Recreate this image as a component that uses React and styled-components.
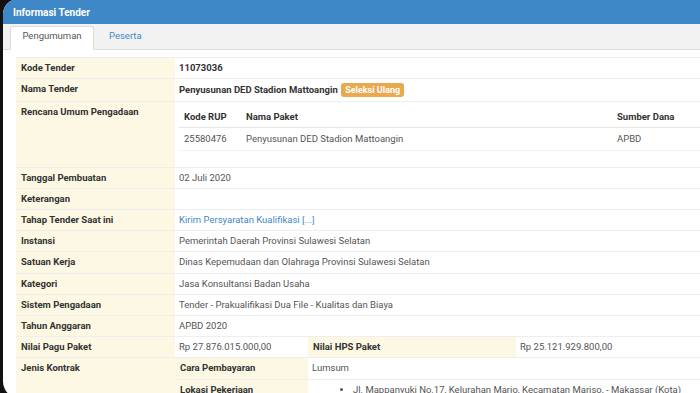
import React from "react";
import styled, { createGlobalStyle } from "styled-components";

const GlobalStyle = createGlobalStyle`
  html, body {
    margin: 0;
    padding: 0;
    background: #111;
    overflow: hidden;
  }
  body {
    font-family: Roboto, "Liberation Sans", sans-serif;
  }
`;

function App() {
  return (
    <>
      <GlobalStyle />
      <Frame>
        <Screen>
          <Header>Informasi Tender</Header>
          <Tabs>
            <Tab active>Pengumuman</Tab>
            <Tab>Peserta</Tab>
          </Tabs>
          <Content>
            <Table>
              <colgroup>
                <col style={{ width: "159px" }} />
                <col style={{ width: "133px" }} />
                <col style={{ width: "208px" }} />
                <col />
              </colgroup>
              <tbody>
                <tr>
                  <Label>Kode Tender</Label>
                  <Value colSpan={3} strong>11073036</Value>
                </tr>
                <tr>
                  <Label>Nama Tender</Label>
                  <Value colSpan={3} strong>
                    Penyusunan DED Stadion Mattoangin <Badge>Seleksi Ulang</Badge>
                  </Value>
                </tr>
                <tr>
                  <Label>Rencana Umum Pengadaan</Label>
                  <Value colSpan={3}>
                    <RupTable>
                      <colgroup>
                        <col style={{ width: "62px" }} />
                        <col style={{ width: "371px" }} />
                        <col />
                      </colgroup>
                      <thead>
                        <tr>
                          <RupHead>Kode RUP</RupHead>
                          <RupHead>Nama Paket</RupHead>
                          <RupHead>Sumber Dana</RupHead>
                        </tr>
                      </thead>
                      <tbody>
                        <tr>
                          <RupCell>25580476</RupCell>
                          <RupCell>Penyusunan DED Stadion Mattoangin</RupCell>
                          <RupCell>APBD</RupCell>
                        </tr>
                      </tbody>
                    </RupTable>
                  </Value>
                </tr>
                <tr>
                  <Label>Tanggal Pembuatan</Label>
                  <Value colSpan={3}>02 Juli 2020</Value>
                </tr>
                <tr>
                  <Label>Keterangan</Label>
                  <Value colSpan={3}></Value>
                </tr>
                <tr>
                  <Label>Tahap Tender Saat ini</Label>
                  <Value colSpan={3}>
                    <Link href="#">Kirim Persyaratan Kualifikasi [...]</Link>
                  </Value>
                </tr>
                <tr>
                  <Label>Instansi</Label>
                  <Value colSpan={3}>Pemerintah Daerah Provinsi Sulawesi Selatan</Value>
                </tr>
                <tr>
                  <Label>Satuan Kerja</Label>
                  <Value colSpan={3}>Dinas Kepemudaan dan Olahraga Provinsi Sulawesi Selatan</Value>
                </tr>
                <tr>
                  <Label>Kategori</Label>
                  <Value colSpan={3}>Jasa Konsultansi Badan Usaha</Value>
                </tr>
                <tr>
                  <Label>Sistem Pengadaan</Label>
                  <Value colSpan={3}>Tender - Prakualifikasi Dua File - Kualitas dan Biaya</Value>
                </tr>
                <tr>
                  <Label>Tahun Anggaran</Label>
                  <Value colSpan={3}>APBD 2020</Value>
                </tr>
                <tr>
                  <Label>Nilai Pagu Paket</Label>
                  <Value>Rp 27.876.015.000,00</Value>
                  <Label>Nilai HPS Paket</Label>
                  <Value>Rp 25.121.929.800,00</Value>
                </tr>
                <tr>
                  <Label rowSpan={2}>Jenis Kontrak</Label>
                  <Label>Cara Pembayaran</Label>
                  <Value colSpan={2}>Lumsum</Value>
                </tr>
                <tr>
                  <Label>Lokasi Pekerjaan</Label>
                  <Value colSpan={2}>
                    <List>
                      <li>Jl. Mappanyuki No.17, Kelurahan Mario, Kecamatan Mariso, - Makassar (Kota)</li>
                    </List>
                  </Value>
                </tr>
              </tbody>
            </Table>
          </Content>
        </Screen>
      </Frame>
    </>
  );
}

export default App;

const Frame = styled.div`
  display: flex;
  width: 700px;
  height: 393px;
  overflow: hidden;
  background: #111;
`;

const Screen = styled.div`
  flex: 1;
  margin-left: 3px;
  margin-top: -1px;
  height: 400px;
  background: #fff;
  border-radius: 15px 0 0 18px;
  overflow: hidden;
`;

const Header = styled.div`
  height: 25px;
  padding: 8px 0 0 10px;
  box-sizing: border-box;
  background: #3f88c8;
  color: #fff;
  font-size: 10px;
  font-weight: 700;
  line-height: 12px;
`;

const Tabs = styled.div`
  display: flex;
  height: 26px;
  padding: 2px 0 0 7px;
  box-sizing: border-box;
  background: #f2f2f2;
  border-bottom: 1px solid #dcdcdc;
`;

const Tab = styled.div`
  width: ${(p) => (p.active ? "70px" : "auto")};
  padding: 3px ${(p) => (p.active ? "6px" : "14px")} 0;
  margin-bottom: -1px;
  font-size: 9.5px;
  line-height: 12px;
  color: ${(p) => (p.active ? "#555" : "#3f88c8")};
  background: ${(p) => (p.active ? "#fff" : "transparent")};
  border: 1px solid ${(p) => (p.active ? "#dcdcdc" : "transparent")};
  border-bottom-color: ${(p) => (p.active ? "#fff" : "transparent")};
  border-radius: 3px 3px 0 0;
  text-align: center;
`;

const Content = styled.div`
  padding: 7px 0 0 13px;
`;

const Table = styled.table`
  width: 700px;
  border-collapse: collapse;
  table-layout: fixed;
  font-size: 9.5px;
`;

const Label = styled.th`
  padding: 4px 5px;
  line-height: 12.2px;
  text-align: left;
  vertical-align: top;
  font-weight: 700;
  color: #333;
  background: #fcf8e3;
  border-top: 1px solid #eee;
  white-space: nowrap;
`;

const Value = styled.td`
  padding: 4px 4px;
  line-height: 12.2px;
  vertical-align: top;
  color: ${(p) => (p.strong ? "#333" : "#555")};
  font-weight: ${(p) => (p.strong ? 700 : 400)};
  border-top: 1px solid #eee;
  white-space: nowrap;
`;

const Badge = styled.span`
  display: inline-block;
  margin-left: 1px;
  padding: 1px 4px;
  line-height: 12px;
  border-radius: 3px;
  background: #eaa94f;
  color: #fff;
  font-size: 9px;
  font-weight: 700;
`;

const RupTable = styled.table`
  width: 100%;
  margin: 1px 0 12px;
  border-collapse: collapse;
  table-layout: fixed;
  font-size: 9.5px;
`;

const RupHead = styled.th`
  padding: 4px 5px;
  line-height: 12.2px;
  text-align: left;
  font-weight: 700;
  color: #333;
  border-bottom: 1px solid #e6e6e6;
`;

const RupCell = styled.td`
  padding: 5px 5px 4px;
  line-height: 12.2px;
  color: #555;
  border-bottom: 1px solid #f3f3f3;
`;

const Link = styled.a`
  color: #3f88c8;
  text-decoration: none;
`;

const List = styled.ul`
  margin: 0;
  padding-left: 41px;
`;
